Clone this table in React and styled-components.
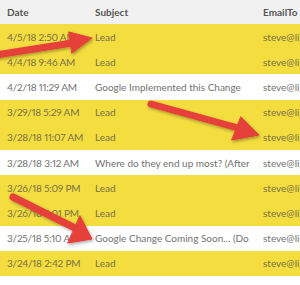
import * as React from "react";
import styled, { createGlobalStyle } from "styled-components";

const rows = [
  { date: "4/5/18 2:50 AM", subject: "Lead", hot: true },
  { date: "4/4/18 9:46 AM", subject: "Lead", hot: true },
  { date: "4/2/18 11:29 AM", subject: "Google Implemented this Change", hot: false },
  { date: "3/29/18 5:29 AM", subject: "Lead", hot: true },
  { date: "3/28/18 11:07 AM", subject: "Lead", hot: true },
  { date: "3/28/18 3:12 AM", subject: "Where do they end up most? (After clicking)", hot: false },
  { date: "3/26/18 5:09 PM", subject: "Lead", hot: true },
  { date: "3/26/18 5:01 PM", subject: "Lead", hot: true },
  { date: "3/25/18 5:10 AM", subject: "Google Change Coming Soon... (Don't panic)", hot: false },
  { date: "3/24/18 2:42 PM", subject: "Lead", hot: true },
];

function App() {
  return (
    <>
      <Global />
      <Page>
        <Table>
          <HeadRow>
            <HeadCell>Date</HeadCell>
            <HeadCell>Subject</HeadCell>
            <HeadCell>EmailTo</HeadCell>
          </HeadRow>
          {rows.map((row, i) => (
            <Row key={i} hot={row.hot}>
              <DateCell>{row.date}</DateCell>
              <SubjectCell>{row.subject}</SubjectCell>
              <Cell>steve@lightningmarketing.com</Cell>
            </Row>
          ))}
        </Table>
        <Arrows width="300" height="285" viewBox="0 0 300 285">
          <defs>
            <filter id="shadow" x="-20%" y="-20%" width="140%" height="140%">
              <feDropShadow dx="1" dy="1.5" stdDeviation="1.5" floodColor="#000" floodOpacity="0.35" />
            </filter>
          </defs>
          <g fill="#e63f3a" stroke="#e63f3a" strokeLinecap="round" filter="url(#shadow)">
            <line x1="-4" y1="55" x2="72" y2="43" strokeWidth="7" />
            <polygon points="69,32 92,38 72,53" strokeWidth="1" strokeLinejoin="round" />
            <line x1="151" y1="104" x2="238" y2="128" strokeWidth="7" />
            <polygon points="241,117 259,135 232,140" strokeWidth="1" strokeLinejoin="round" />
            <line x1="13" y1="197" x2="75" y2="228" strokeWidth="7" />
            <polygon points="80,216 92,239 68,243" strokeWidth="1" strokeLinejoin="round" />
          </g>
        </Arrows>
      </Page>
    </>
  );
}

const Global = createGlobalStyle`
  html, body {
    margin: 0;
    padding: 0;
    background: #ffffff;
  }
`;

const Page = styled.div`
  position: relative;
  width: 300px;
  height: 285px;
  overflow: hidden;
  background: #ffffff;
  font-family: Lato, "Open Sans", sans-serif;
`;

const Table = styled.div`
  display: flex;
  flex-direction: column;
  width: 340px;
`;

const HeadRow = styled.div`
  display: grid;
  grid-template-columns: 88px 168px 1fr;
  align-items: center;
  height: 24px;
  padding-left: 7px;
  background: #f1f1f1;
`;

const HeadCell = styled.div`
  font-size: 10px;
  font-weight: 700;
  color: #555555;
  white-space: nowrap;
`;

const Row = styled.div`
  display: grid;
  grid-template-columns: 88px 168px 1fr;
  align-items: center;
  height: 25.2px;
  padding-left: 7px;
  background: ${(props) => (props.hot ? "#f3dd3f" : "#ffffff")};
  color: ${(props) => (props.hot ? "#7a7148" : "#727272")};
`;

const Cell = styled.div`
  font-size: 10px;
  white-space: nowrap;
  overflow: hidden;
`;

const DateCell = styled(Cell)`
  font-variant-numeric: proportional-nums;
  letter-spacing: -0.2px;
`;

const SubjectCell = styled(Cell)`
  width: 154px;
`;

const Arrows = styled.svg`
  position: absolute;
  top: 0;
  left: 0;
  pointer-events: none;
`;

export default App;
